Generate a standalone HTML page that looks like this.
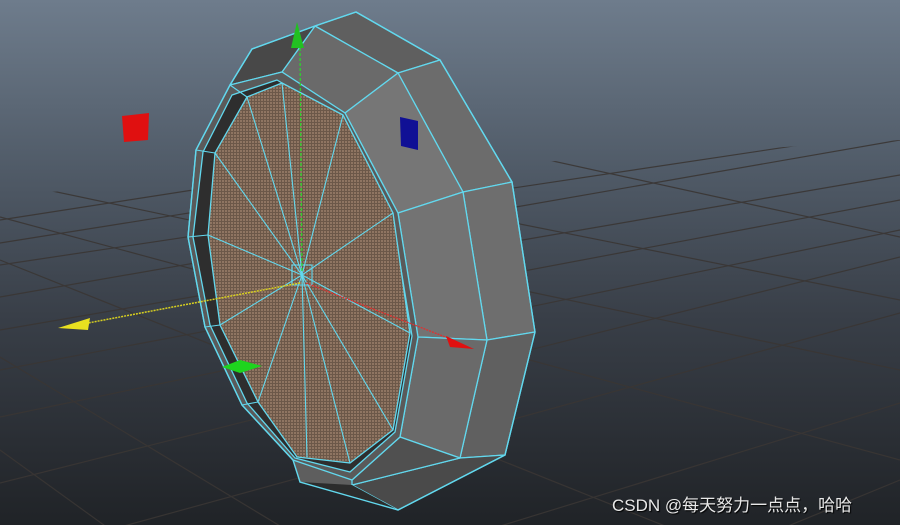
<!DOCTYPE html>
<html><head><meta charset="utf-8"><style>
html,body{margin:0;padding:0;width:900px;height:525px;overflow:hidden;background:#2b2f35;position:relative}
svg{display:block;position:absolute;left:0;top:0}
.wm{position:absolute;left:612px;top:496px;height:20px;line-height:20px;font:17px/20px "Liberation Sans","Noto Sans CJK SC",sans-serif;color:#e8e8e8;text-shadow:1px 1px 1px #000;white-space:nowrap}
</style></head><body>
<svg width="900" height="525" viewBox="0 0 900 525" xmlns="http://www.w3.org/2000/svg">
<defs>
<linearGradient id="bg" x1="0" y1="0" x2="0" y2="1">
<stop offset="0" stop-color="#6e7c8c"/><stop offset="0.3" stop-color="#525d6a"/><stop offset="0.6" stop-color="#393f48"/><stop offset="1" stop-color="#202327"/></linearGradient>
<pattern id="tx" width="3" height="3" patternUnits="userSpaceOnUse">
<rect width="3" height="3" fill="#6c5849"/><rect width="2" height="2" fill="#8f7562"/></pattern>
<clipPath id="gc"><polygon points="0,195 900,140 900,525 0,525"/></clipPath>
</defs>
<rect width="900" height="525" fill="url(#bg)"/>
<g clip-path="url(#gc)" stroke="#3a3634" stroke-width="1.2" opacity="0.9">
<line x1="0" y1="40" x2="900" y2="237"/><line x1="0" y1="120" x2="900" y2="300"/><line x1="0" y1="180" x2="900" y2="370"/><line x1="0" y1="217" x2="900" y2="460"/><line x1="0" y1="260" x2="900" y2="620"/><line x1="0" y1="357" x2="900" y2="900"/><line x1="0" y1="450" x2="900" y2="1100"/>
<line x1="0" y1="220" x2="900" y2="80"/><line x1="0" y1="243" x2="900" y2="100"/><line x1="0" y1="265" x2="900" y2="130"/><line x1="0" y1="297" x2="900" y2="140"/><line x1="0" y1="330" x2="900" y2="175"/><line x1="0" y1="370" x2="900" y2="200"/><line x1="0" y1="417" x2="900" y2="230"/><line x1="0" y1="483" x2="900" y2="257"/><line x1="0" y1="560" x2="900" y2="313"/><line x1="0" y1="680" x2="900" y2="403"/><line x1="0" y1="850" x2="900" y2="480"/>
</g>
<polygon points="356,12 440,60 512,182 535,332 505,455 398,510 300,482 293,460 242,405 205,327 188,237 196,150 230,85 252,49 315,26" fill="#5e5e5e"/>
<g stroke="#62d8ee" stroke-width="1.3" stroke-linejoin="round">
<polygon points="315,26 356,12 440,60 398,73" fill="#5f5f5f"/>
<polygon points="398,73 440,60 512,182 463,192" fill="#6c6c6c"/>
<polygon points="463,192 512,182 535,332 487,340" fill="#6e6e6e"/>
<polygon points="487,340 535,332 505,455 460,458" fill="#606060"/>
<polygon points="460,458 505,455 398,510 352,485" fill="#4a4a4a"/>
<polygon points="282,72 315,26 398,73 345,113" fill="#6a6a6a"/>
<polygon points="345,113 398,73 463,192 398,213" fill="#767676"/>
<polygon points="398,213 463,192 487,340 418,337" fill="#737373"/>
<polygon points="418,337 487,340 460,458 400,437" fill="#6a6a6a"/>
<polygon points="400,437 460,458 352,485 352,480" fill="#505050"/>
<polygon points="252,49 315,26 282,72 230,85" fill="#484848"/>
<polygon points="300,482 352,485 398,510" fill="#2c2c2c" stroke="none"/>
<polygon points="282,72 345,113 398,213 418,337 400,437 352,480 293,460 242,405 205,327 188,237 196,150 230,85" fill="#5a5a5a"/>
<polygon points="277,80 341,118 392,215 412,336 395,432 350,472 295,458 247,403 210,325 193,237 203,152 232,95" fill="#2e2e2e"/>
<polygon points="247,97 282,83 343,115 393,213 410,333 393,430 350,463 297,457 258,402 220,325 208,235 215,153" fill="url(#tx)"/>
<g fill="none" stroke-width="1.1">
<line x1="302" y1="275" x2="247" y2="97"/><line x1="302" y1="275" x2="282" y2="83"/><line x1="302" y1="275" x2="343" y2="115"/><line x1="302" y1="275" x2="393" y2="213"/><line x1="302" y1="275" x2="410" y2="333"/><line x1="302" y1="275" x2="393" y2="430"/><line x1="302" y1="275" x2="350" y2="463"/><line x1="302" y1="275" x2="307" y2="457"/><line x1="302" y1="275" x2="258" y2="402"/><line x1="302" y1="275" x2="220" y2="325"/><line x1="302" y1="275" x2="208" y2="235"/><line x1="302" y1="275" x2="215" y2="153"/>
<polyline points="188,237 208,235"/><polyline points="205,327 220,325"/><polyline points="242,405 258,402"/><polyline points="196,150 215,153"/><polyline points="230,85 247,97"/>
<rect x="292" y="265" width="20" height="20"/>
</g>
</g>
<polygon points="356,12 440,60 512,182 535,332 505,455 398,510 300,482 293,460 242,405 205,327 188,237 196,150 230,85 252,49 315,26" fill="none" stroke="#62d8ee" stroke-width="1.4"/>
<line x1="300" y1="48" x2="302" y2="272" stroke="#2bd62b" stroke-width="1.3" stroke-dasharray="3,2"/>
<polygon points="297,22 291,48 304,48" fill="#22c022"/>
<line x1="300" y1="283" x2="88" y2="323" stroke="#d8d020" stroke-width="1.5" stroke-dasharray="2,1"/>
<polygon points="58,328 90,318 88,330" fill="#e8e020"/>
<line x1="306" y1="283" x2="448" y2="338" stroke="#e03030" stroke-width="1.3" stroke-dasharray="2,1"/>
<polygon points="446,336 474,349 450,347" fill="#e01010"/>
<polygon points="122,116 149,113 148,140 124,142" fill="#e01010"/>
<polygon points="400,117 418,121 418,150 401,146" fill="#101095"/>
<polygon points="222,367 240,360 262,366 240,373" fill="#1ed41e"/>
</svg>
<div class="wm">CSDN @每天努力一点点，哈哈</div>
</body></html>
